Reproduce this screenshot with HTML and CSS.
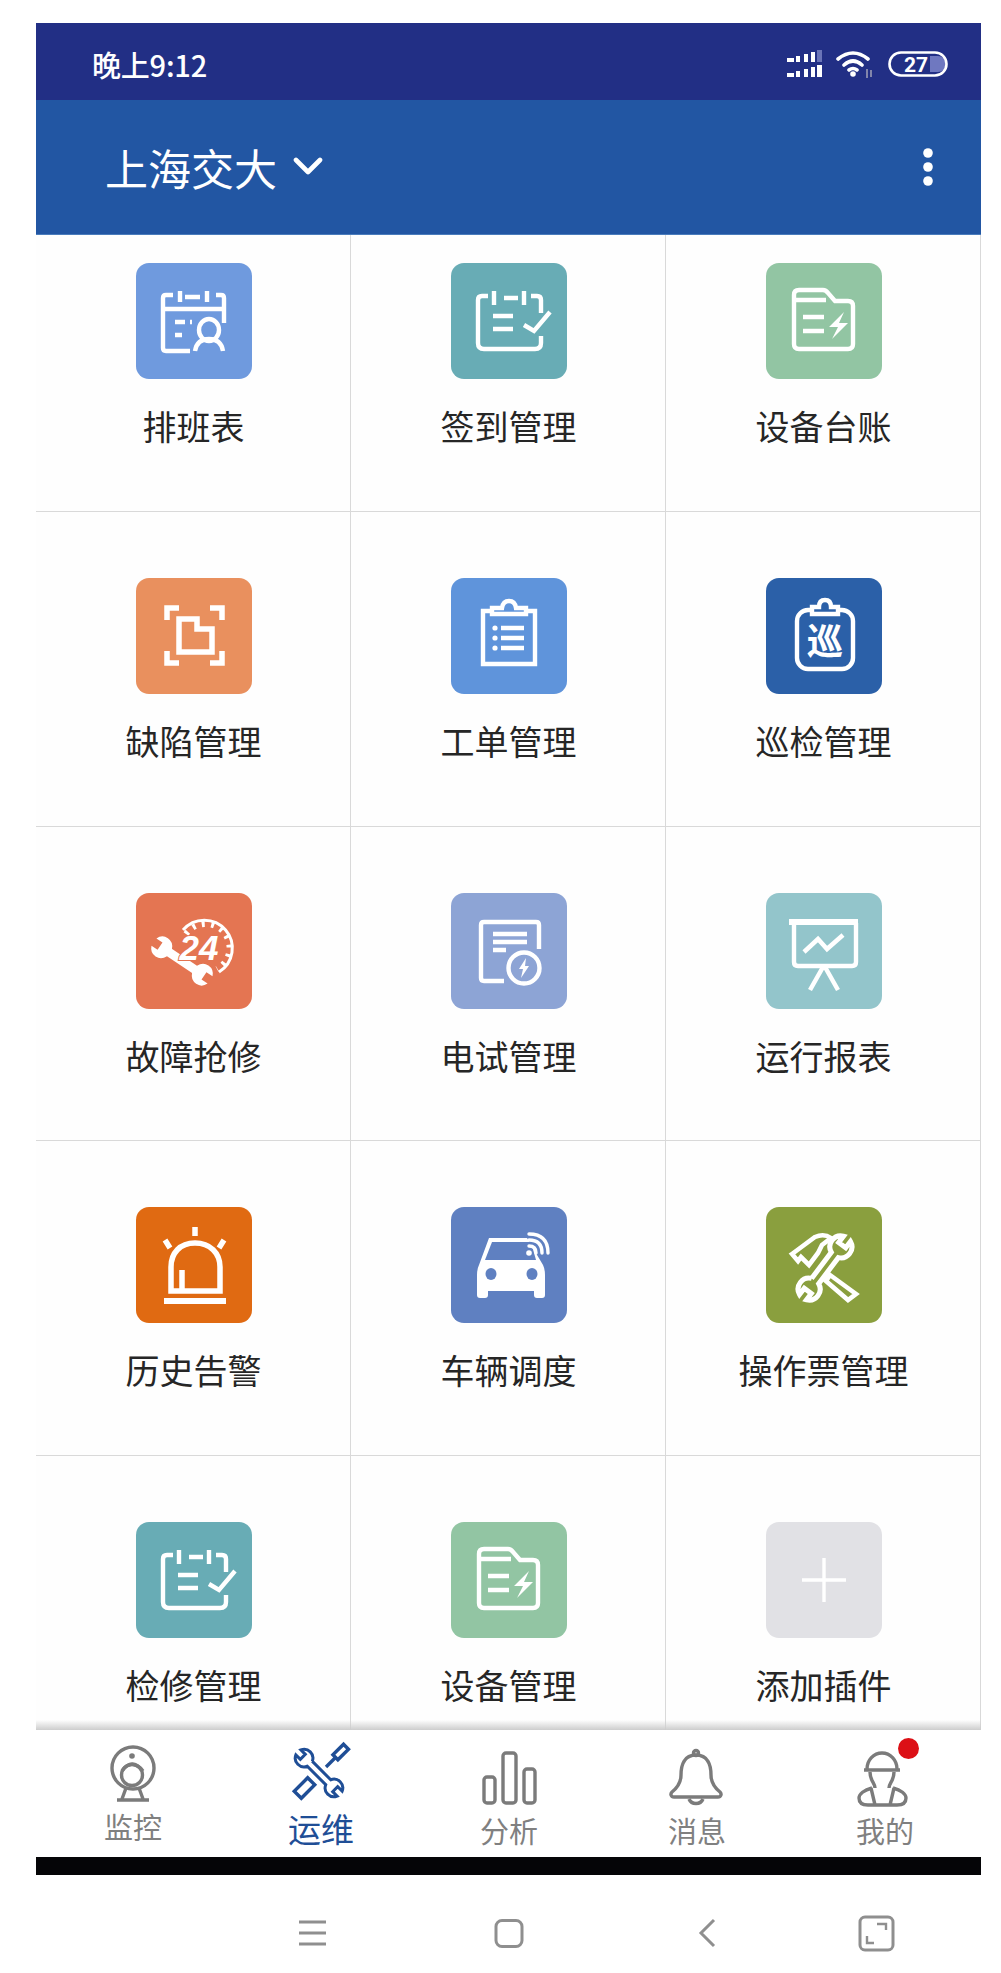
FILE: index.html
```html
<!DOCTYPE html>
<html lang="zh-CN">
<head>
<meta charset="utf-8">
<title>运维</title>
<link rel="stylesheet" href="styles.css">
</head>
<body>
<svg class="defs" width="0" height="0" aria-hidden="true">
  <defs>
    <path id="wrench" d="M-15-4H14.83A10 10 0 0 1 33.17-4H26V4H33.17A10 10 0 0 1 14.83 4H-14.83A10 10 0 0 1-33.17 4H-26V-4H-33.17A10 10 0 0 1-14.83-4Z"/>
    <g id="g-check">
      <path d="M37 33H31Q27 33 27 37V80Q27 86 33 86H84Q90 86 90 80V73M90 50V37Q90 33 86 33H80"/>
      <path d="M43 28V42M73 28V42M53 35H67M42 53H62M42 66H62"/>
      <path d="M73 62L83 68L99 49"/>
    </g>
    <g id="g-folder">
      <path d="M28 32Q28 27 33 27H57Q60 27 62 30L69 38H82Q87 38 87 43V81Q87 86 82 86H33Q28 86 28 81ZM28 37H60"/>
      <path d="M37 54H58M37 68H58"/>
      <path class="solid" d="M78 49L63 64H72L66 76L82 60H73Z"/>
    </g>
  </defs>
</svg>
<div class="phone">
  <div class="status">
    <span class="time">晚上9:12</span>
    <div class="status-icons">
      <svg width="36" height="28" viewBox="0 0 36 28">
        <g fill="#fff">
          <rect x="1" y="8" width="7" height="4"/><rect x="10" y="6" width="4" height="6"/><rect x="18" y="4" width="4" height="8"/><rect x="25" y="2" width="4" height="10"/>
          <rect x="31" y="0" width="5" height="12" fill="#6a74b8"/>
          <rect x="1" y="23" width="7" height="4"/><rect x="10" y="21" width="4" height="6"/><rect x="18" y="19" width="4" height="8"/><rect x="25" y="17" width="4" height="10"/><rect x="31" y="15" width="5" height="12"/>
        </g>
      </svg>
      <svg width="38" height="28" viewBox="0 0 38 28">
        <g fill="none" stroke="#fff" stroke-width="3.6" stroke-linecap="round">
          <path d="M2 9Q17-3 32 9M8 15Q17 7 26 15M13 20Q17 17 21 20"/>
        </g>
        <circle cx="17" cy="24" r="2.8" fill="#fff"/>
        <path d="M31 19V28M35 20V27" stroke="#aab" stroke-width="1.4"/>
      </svg>
      <svg width="60" height="26" viewBox="0 0 60 26">
        <path d="M42 5H50A8 8 0 0 1 50 21H42Z" fill="#6f78c0"/>
        <rect x="1.5" y="1.5" width="57" height="23" rx="11.5" fill="none" stroke="#fff" stroke-width="2.6"/>
        <text class="bat-text" x="28" y="20.5" text-anchor="middle">27</text>
      </svg>
    </div>
  </div>
  <header class="appbar">
    <div class="site">
      <span class="site-name">上海交大</span>
      <svg class="chev" width="30" height="20" viewBox="0 0 30 20"><path d="M3 3L15 15L27 3" fill="none" stroke="#fff" stroke-width="4.6" stroke-linecap="round" stroke-linejoin="round"/></svg>
    </div>
    <svg width="10" height="40" viewBox="0 0 10 40"><g fill="#fff"><circle cx="5" cy="6" r="4.8"/><circle cx="5" cy="20" r="4.8"/><circle cx="5" cy="34" r="4.8"/></g></svg>
  </header>
  <main class="viewport">
    <div class="grid">
      <a class="cell"><span class="ic c1"><svg class="g" viewBox="0 0 116 116">
        <path d="M37 32H30Q27 32 27 35V85Q27 88 30 88H54M80 32H85Q88 32 88 35V60M27 46H88"/>
        <path d="M44 28V39M71 28V39M49 34H64M39 59H49M54 59H56M39 72H46"/>
        <ellipse cx="73" cy="67" rx="10" ry="11"/><path d="M59 88Q61 76 73 76Q85 76 87 88"/>
      </svg></span><span class="name">排班表</span></a>
      <a class="cell"><span class="ic c2"><svg class="g" viewBox="0 0 116 116"><use href="#g-check"/></svg></span><span class="name">签到管理</span></a>
      <a class="cell"><span class="ic c3"><svg class="g" viewBox="0 0 116 116"><use href="#g-folder"/></svg></span><span class="name">设备台账</span></a>

      <a class="cell"><span class="ic c4"><svg class="g" viewBox="0 0 116 116">
        <path stroke-width="5.5" d="M43 30H31V42M74 30H86V42M31 73V85H43M86 73V85H74"/>
        <path stroke-width="5.5" d="M43 41H61V51H76V74H43Z"/>
      </svg></span><span class="name">缺陷管理</span></a>
      <a class="cell"><span class="ic c5"><svg class="g" viewBox="0 0 116 116">
        <path d="M41 33H32V86H84V33H75"/>
        <path d="M41 36V30H51Q52 23 58 23Q64 23 65 30H75V36Z"/>
        <path d="M50 50H73M50 60H73M50 70H73"/>
        <g class="solid"><circle cx="44" cy="50" r="2.6"/><circle cx="44" cy="60" r="2.6"/><circle cx="44" cy="70" r="2.6"/></g>
      </svg></span><span class="name">工单管理</span></a>
      <a class="cell"><span class="ic c6"><svg class="g" viewBox="0 0 116 116">
        <rect x="31" y="32" width="56" height="59" rx="11"/>
        <path d="M46 36V29H53Q53 22 59 22Q65 22 65 29H72V36Z" fill="#2b60a8"/>
        <text class="xun" x="59" y="77" text-anchor="middle">巡</text>
      </svg></span><span class="name">巡检管理</span></a>

      <a class="cell"><span class="ic c7"><svg class="g" viewBox="0 0 116 116">
        <path stroke-width="3" d="M47 37A28 28 0 1 1 83 79"/>
        <path stroke-width="6" stroke-dasharray="3 6.5" d="M50 41A24 24 0 1 1 81 76"/>
        <use class="solid" href="#wrench" transform="translate(46 68) rotate(34) scale(1.02 1.1)"/>
        <text class="num" x="63" y="67" text-anchor="middle">24</text>
      </svg></span><span class="name">故障抢修</span></a>
      <a class="cell"><span class="ic c8"><svg class="g" viewBox="0 0 116 116">
        <path d="M53 88H33Q30 88 30 85V32Q30 29 33 29H85Q88 29 88 32V56"/>
        <path stroke-width="4.5" d="M42 41H76M42 49H76M42 57H55"/>
        <circle cx="73" cy="75" r="15.5"/>
        <path class="solid" d="M75 65L68 76H72L70 85L78 73H74Z"/>
      </svg></span><span class="name">电试管理</span></a>
      <a class="cell"><span class="ic c9"><svg class="g" viewBox="0 0 116 116">
        <path stroke-width="6" d="M23 29H92"/>
        <path d="M28 30V69Q28 73 32 73H86Q90 73 90 69V30"/>
        <path stroke-width="4.5" d="M38 59L52 46L61 56L77 42M57 74L44 97M59 74L72 97"/>
      </svg></span><span class="name">运行报表</span></a>

      <a class="cell"><span class="ic c10"><svg class="g" viewBox="0 0 116 116">
        <path stroke-width="5.5" d="M59 20V29M29 33L34 41M88 33L83 41"/>
        <path stroke-width="5.5" d="M35 84V60C35 46 44 36 59 36C74 36 84 46 84 60V84Z"/>
        <path stroke-width="5.5" d="M46 63V84"/>
        <path stroke-width="6" d="M28 94H90"/>
      </svg></span><span class="name">历史告警</span></a>
      <a class="cell"><span class="ic c11"><svg class="g" viewBox="0 0 116 116">
        <path class="solid" d="M38 31H76L92 58Q94 62 94 68V88Q94 91 91 91H86Q83 91 83 88V84H37V88Q37 91 34 91H29Q26 91 26 88V68Q26 62 28 58Z"/>
        <path class="hole" d="M41 35H80L85 53H34Z"/>
        <ellipse class="hole" cx="40" cy="67" rx="5.5" ry="6"/><ellipse class="hole" cx="81" cy="67" rx="5.5" ry="6"/>
        <circle class="solid" cx="78" cy="46" r="2.8"/>
        <path stroke-width="3.4" d="M78 39Q85 39 85 46M78 33Q91 33 91 46M78 27Q97 27 97 46" stroke-linecap="round"/>
      </svg></span><span class="name">车辆调度</span></a>
      <a class="cell"><span class="ic c12"><svg class="g" viewBox="0 0 116 116">
        <use href="#wrench" transform="translate(59 61) rotate(-53) scale(1.1)" stroke-width="4.6"/>
        <path stroke-width="4.6" d="M26 47L49 30Q58 26 65 31L56 38L52 46L43 58L35 50L32 54Z"/>
        <path stroke-width="4.6" d="M64 68L90 87L82 93L60 74Z"/>
      </svg></span><span class="name">操作票管理</span></a>

      <a class="cell"><span class="ic c2"><svg class="g" viewBox="0 0 116 116"><use href="#g-check"/></svg></span><span class="name">检修管理</span></a>
      <a class="cell"><span class="ic c3"><svg class="g" viewBox="0 0 116 116"><use href="#g-folder"/></svg></span><span class="name">设备管理</span></a>
      <a class="cell"><span class="ic c13"><svg class="g" viewBox="0 0 116 116"><path stroke-width="3.4" d="M36 58H80M58 36V80"/></svg></span><span class="name">添加插件</span></a>
    </div>
  </main>
  <nav class="tabs">
    <a class="tab">
      <svg class="tg" viewBox="0 0 64 76">
        <circle cx="32" cy="37" r="21"/><circle cx="31" cy="44" r="10.5"/>
        <path d="M21 40Q31 26 42 40"/>
        <circle class="tfill" cx="31" cy="25" r="2.8" stroke="none"/>
        <path d="M25 57L21 68M38 57L42 68M16 69H48"/>
      </svg>
      <span class="tlabel">监控</span>
    </a>
    <a class="tab active">
      <svg class="tg" viewBox="0 0 64 76">
        <use href="#wrench" transform="translate(30 42) rotate(45) scale(.88)" stroke-width="3.4"/>
        <rect x="6" y="52" width="19" height="10" transform="rotate(-45 15.5 57)"/>
        <rect x="44" y="18" width="15" height="7" transform="rotate(-45 51 21)"/>
        <path d="M37 36L47 26"/>
      </svg>
      <span class="tlabel">运维</span>
    </a>
    <a class="tab">
      <svg class="tg" viewBox="0 0 64 76">
        <rect x="7" y="46" width="11" height="26" rx="3"/><rect x="26" y="22" width="13" height="50" rx="3"/><rect x="47" y="38" width="11" height="34" rx="3"/>
      </svg>
      <span class="tlabel low">分析</span>
    </a>
    <a class="tab">
      <svg class="tg" viewBox="0 0 64 76">
        <path d="M31 24C19 24 16 34 16 44C16 52 12 57 7 61C5 63 6 66 9 66H53C56 66 57 63 55 61C50 57 46 52 46 44C46 34 43 24 31 24Z"/>
        <circle cx="31" cy="22" r="2.5"/>
        <path d="M24 68A7.5 7 0 0 0 38 68"/>
      </svg>
      <span class="tlabel low">消息</span>
    </a>
    <a class="tab">
      <svg class="tg" viewBox="0 0 64 76">
        <path d="M14 38A15 16 0 0 1 44 38M11 39H47"/>
        <path d="M17 41C17 50 22 52 22 57M41 41C41 50 36 52 36 57"/>
        <path d="M19 57C11 59 6 63 6 67C6 72 10 74 15 74H44C49 74 53 72 53 67C53 63 48 59 40 57M18 57L22 74M41 57L37 74"/>
      </svg>
      <span class="tlabel low">我的</span>
      <span class="badge"></span>
    </a>
  </nav>
  <div class="blackbar"></div>
</div>
<footer class="sysnav">
  <svg width="680" height="40" viewBox="0 0 680 40">
    <g fill="none" stroke="#8f8f8f" stroke-width="3">
      <path d="M1 7H28M1 18H28M1 29H28"/>
      <rect x="198" y="5.5" width="26" height="26" rx="6"/>
      <path d="M416 5L403 18L416 31"/>
      <rect x="562" y="2" width="33" height="33" rx="5"/>
      <path d="M579 9H588V15M569 21V28H576" stroke-width="2.4"/>
    </g>
  </svg>
</footer>
</body>
</html>
```
FILE: styles.css
```css
* { box-sizing: border-box; }
html, body { margin: 0; padding: 0; background: #fff; }
body {
  width: 1001px;
  height: 1973px;
  padding: 23px 20px 0 36px;
  font-family: "Noto Sans CJK SC", "Noto Sans", sans-serif;
  overflow: hidden;
}
.defs { position: absolute; }
.phone { width: 945px; display: flex; flex-direction: column; background: #fefefe; overflow: hidden; }

.status {
  height: 77px;
  background: #222f85;
  color: #fff;
  display: flex;
  align-items: center;
  justify-content: space-between;
  padding: 5px 33px 0 56px;
}
.time { font-size: 29px; font-weight: 500; line-height: 1; letter-spacing: -.2px; }
.status-icons { display: flex; align-items: center; gap: 14px; }
.bat-text { font: 700 21px "Roboto", sans-serif; fill: #fff; }

.appbar {
  height: 135px;
  background: #2256a3;
  border-bottom: 1px solid #4a7cbc;
  display: flex;
  align-items: center;
  justify-content: space-between;
  padding: 0 48px 0 69px;
}
.site { display: flex; align-items: center; gap: 16px; color: #fff; }
.site-name { font-size: 43px; line-height: 1; }

.viewport { height: 1495px; overflow: hidden; }
.grid {
  margin-top: -38px;
  display: grid;
  grid-template-columns: repeat(3, 315px);
  grid-auto-rows: 314.75px;
}
.cell {
  display: flex;
  flex-direction: column;
  align-items: center;
  padding: 66px 0 0 1px;
  border-right: 1px solid #d9d9d9;
  border-bottom: 1px solid #d9d9d9;
}
.ic { width: 116px; height: 116px; border-radius: 13px; display: block; }
.g { display: block; width: 116px; height: 116px; fill: none; stroke: #fff; stroke-width: 4.4; stroke-linecap: butt; }
.solid { fill: #fff; stroke: none; }
.c1 { background: #6f9ade; }
.c2 { background: #68acb5; }
.c3 { background: #92c5a3; }
.c4 { background: #e9905e; }
.c5 { background: #5f94db; }
.c6 { background: #2b60a8; }
.c7 { background: #e47552; }
.c8 { background: #8da4d5; }
.c9 { background: #93c5cb; }
.c10 { background: #e06a12; }
.c11 { background: #5f80c1; }
.c12 { background: #8a9f3e; }
.c13 { background: #e1e1e5; }
.c11 .hole { fill: #5f80c1; stroke: none; }
.xun { font-size: 36px; font-weight: 700; fill: #fff; stroke: none; }
.num { font: italic 800 35px "Liberation Sans", sans-serif; fill: #fff; stroke: #e47552; stroke-width: 2; paint-order: stroke; }
.name { margin-top: 24px; font-size: 34px; line-height: 46px; color: #262626; }

.tabs {
  height: 127px;
  padding-left: 3px;
  background: #fff;
  display: grid;
  grid-template-columns: repeat(5, 188px);
  position: relative;
}
.tabs::before {
  content: "";
  position: absolute;
  left: 0;
  right: 0;
  top: -10px;
  height: 10px;
  background: linear-gradient(rgba(205, 205, 205, 0), rgba(205, 205, 205, 1));
}
.tab { display: flex; flex-direction: column; align-items: center; padding-top: 1px; color: #808080; position: relative; }
.tg { display: block; width: 64px; height: 76px; fill: none; stroke: #7b7b7b; stroke-width: 3.4; }
.tfill { fill: #7b7b7b; }
.tlabel { margin-top: 3px; font-size: 29px; line-height: 32px; }
.tlabel.low { margin-top: 7px; }
.active { color: #1f4e96; }
.active .tg { stroke: #1f4e96; }
.active .tlabel { font-size: 33px; line-height: 36px; }
.badge {
  position: absolute;
  top: 8px;
  left: 107px;
  width: 21px;
  height: 21px;
  border-radius: 50%;
  background: #dc1016;
}
.blackbar { height: 18px; background: #050507; }
.sysnav { display: flex; padding: 40px 0 0 262px; }
```
